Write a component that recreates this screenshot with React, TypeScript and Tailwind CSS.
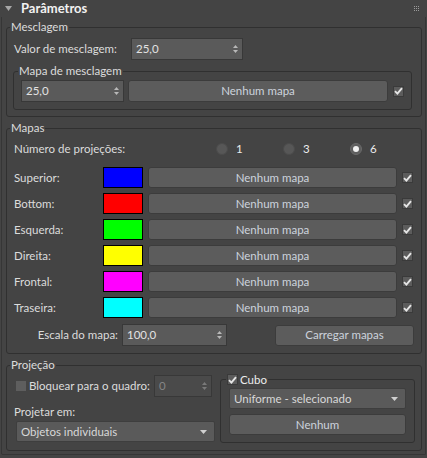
import React from "react";

function Arrows({ dim = false }: { dim?: boolean }) {
  const c = dim ? "#7a7a7a" : "#b8b8b8";
  return (
    <svg width="5" height="8" viewBox="0 0 5 8">
      <path d="M2.5 0L5 3H0Z" fill={c} />
      <path d="M2.5 8L5 5H0Z" fill={c} />
    </svg>
  );
}

function Spinner({ value, className = "", dim = false }: { value: string; className?: string; dim?: boolean }) {
  return (
    <div
      className={`flex items-center justify-between border border-[#383838] pl-[4px] pr-[4px] ${
        dim ? "bg-[#4a4a4a] text-[#858585]" : "bg-[#5a5a5a] text-[#e2e2e2]"
      } ${className}`}
    >
      <span>{value}</span>
      <Arrows dim={dim} />
    </div>
  );
}

function Check({ checked = true }: { checked?: boolean }) {
  return (
    <div className="w-[11px] h-[11px] shrink-0 bg-[#5c5c5c] border border-[#3a3a3a] flex items-center justify-center">
      {checked && (
        <svg width="9" height="8" viewBox="0 0 9 8">
          <path d="M1 4.2L3.4 6.6L8 1.2" stroke="#e6e6e6" strokeWidth="1.9" fill="none" />
        </svg>
      )}
    </div>
  );
}

function Btn({ children, className = "" }: { children: React.ReactNode; className?: string }) {
  return (
    <div
      className={`flex items-center justify-center rounded-[3px] border border-[#3c3c3c] bg-[#5c5c5c] text-[#ccd3dd] ${className}`}
    >
      {children}
    </div>
  );
}

function Radio({ on = false, label }: { on?: boolean; label: string }) {
  return (
    <div className="w-[67px] flex items-center">
      <div
        className={`w-[12px] h-[12px] rounded-full flex items-center justify-center ${
          on ? "bg-[#5e5e5e] border border-[#6a6a6a]" : "bg-[#575757] border border-[#4c4c4c]"
        }`}
      >
        {on && <div className="w-[6px] h-[6px] rounded-full bg-[#f0f0f0]" />}
      </div>
      <span className="ml-[8px] text-[#ececec]">{label}</span>
    </div>
  );
}

function Dropdown({ value, className = "" }: { value: string; className?: string }) {
  return (
    <div
      className={`flex items-center justify-between bg-[#5a5a5a] border border-[#3e3e3e] rounded-[2px] pl-[4px] pr-[7px] text-[#d8d8d8] ${className}`}
    >
      <span>{value}</span>
      <svg width="7" height="4" viewBox="0 0 7 4">
        <path d="M0 0H7L3.5 4Z" fill="#d0d0d0" />
      </svg>
    </div>
  );
}

const rows: { label: string; color: string }[] = [
  { label: "Superior:", color: "bg-[#0000ff]" },
  { label: "Bottom:", color: "bg-[#ff0000]" },
  { label: "Esquerda:", color: "bg-[#00ff00]" },
  { label: "Direita:", color: "bg-[#ffff00]" },
  { label: "Frontal:", color: "bg-[#ff00ff]" },
  { label: "Traseira:", color: "bg-[#00ffff]" },
];

export default function App() {
  return (
    <div className="w-[427px] h-[458px] bg-[#444444] font-['Lato',sans-serif] text-[11.5px] text-[#dcdcdc] leading-none overflow-hidden select-none whitespace-nowrap">
      {/* header */}
      <div className="h-[17px] flex items-center pl-[5px] pr-[8px]">
        <svg width="7" height="5" viewBox="0 0 7 5" className="mr-[9px]">
          <path d="M0 0H7L3.5 5Z" fill="#a8a8a8" />
        </svg>
        <span className="font-bold text-[13px] text-[#f2f2f2]">Parâmetros</span>
        <svg className="ml-auto" width="5" height="5" viewBox="0 0 5 5">
          {[0, 2, 4].map((x) =>
            [0, 2, 4].map((y) => <rect key={`${x}-${y}`} x={x} y={y} width="1" height="1" fill="#9a9a9a" />)
          )}
        </svg>
      </div>

      {/* rollout frame */}
      <div className="mx-[1px] border-x border-b border-[#363636] rounded-b-[2px] pl-[4px] pr-[3px] pt-[2px] pb-[3px]">
        {/* Mesclagem */}
        <fieldset className="rounded-[3px] border border-[#303030] p-0 m-0">
          <legend className="ml-[3px] px-[1px] leading-[16px]">Mesclagem</legend>
          <div className="pl-[7px] pt-[3px] pb-[6px]">
            <div className="flex items-center h-[22px]">
              <span className="w-[117px]">Valor de mesclagem:</span>
              <Spinner value="25,0" className="w-[112px] h-[22px]" />
            </div>
            <fieldset className="mt-[3px] -ml-[1px] w-[399px] rounded-[3px] border border-[#303030] p-0">
              <legend className="ml-[4px] px-[1px] leading-[16px]">Mapa de mesclagem</legend>
              <div className="pl-[7px] pt-[1px] pb-[7px] flex items-center">
                <Spinner value="25,0" className="w-[103px] h-[22px]" />
                <Btn className="ml-[4px] w-[260px] h-[22px]">Nenhum mapa</Btn>
                <div className="ml-[5px]">
                  <Check />
                </div>
              </div>
            </fieldset>
          </div>
        </fieldset>

        {/* Mapas */}
        <fieldset className="mt-[3px] rounded-[3px] border border-[#303030] p-0">
          <legend className="ml-[3px] px-[1px] leading-[16px]">Mapas</legend>
          <div className="pl-[7px] pt-[2px] pb-[7px]">
            <div className="flex items-center h-[22px]">
              <span className="w-[202px]">Número de projeções:</span>
              <Radio label="1" />
              <Radio label="3" />
              <Radio label="6" on />
            </div>
            <div className="mt-[7px] flex flex-col gap-[5px]">
              {rows.map((r) => (
                <div key={r.label} className="flex items-center h-[21px]">
                  <span className="w-[89px]">{r.label}</span>
                  <div className={`w-[40px] h-[21px] border border-black ${r.color}`} />
                  <Btn className="ml-[5px] w-[249px] h-[21px]">Nenhum mapa</Btn>
                  <div className="ml-[5px]">
                    <Check />
                  </div>
                </div>
              ))}
            </div>
            <div className="mt-[6px] flex items-center h-[22px]">
              <span className="w-[104px] text-right">Escala do mapa:</span>
              <Spinner value="100,0" className="ml-[4px] w-[105px] h-[22px]" />
              <Btn className="ml-[48px] w-[139px] h-[21px]">Carregar mapas</Btn>
            </div>
          </div>
        </fieldset>

        {/* Projeção */}
        <fieldset className="mt-[3px] rounded-[3px] border border-[#303030] p-0">
          <legend className="ml-[3px] px-[1px] leading-[16px]">Projeção</legend>
          <div className="pl-[7px] pb-[7px] flex items-start">
            <div className="w-[202px] shrink-0 pt-[2px]">
              <div className="flex items-center h-[22px]">
                <div className="ml-[2px] w-[10px] h-[10px] shrink-0 bg-[#5e5e5e]" />
                <span className="ml-[3px] w-[125px] shrink-0">Bloquear para o quadro:</span>
                <Spinner value="0" dim className="w-[58px] h-[22px] shrink-0" />
              </div>
              <div className="mt-[7px] h-[16px] flex items-center">Projetar em:</div>
              <Dropdown value="Objetos individuais" className="mt-[1px] ml-[2px] w-[199px] h-[21px]" />
            </div>
            <fieldset className="ml-[4px] w-[195px] rounded-[3px] border border-[#303030] p-0">
              <legend className="ml-[5px] px-[1px] leading-[13px]">
                <span className="flex items-center">
                  <Check />
                  <span className="ml-[2px] text-[#ececec]">Cubo</span>
                </span>
              </legend>
              <div className="pl-[8px] pt-[2px] pb-[7px]">
                <Dropdown value="Uniforme - selecionado" className="w-[177px] h-[21px]" />
                <Btn className="mt-[5px] w-[177px] h-[21px]">Nenhum</Btn>
              </div>
            </fieldset>
          </div>
        </fieldset>
      </div>
    </div>
  );
}
